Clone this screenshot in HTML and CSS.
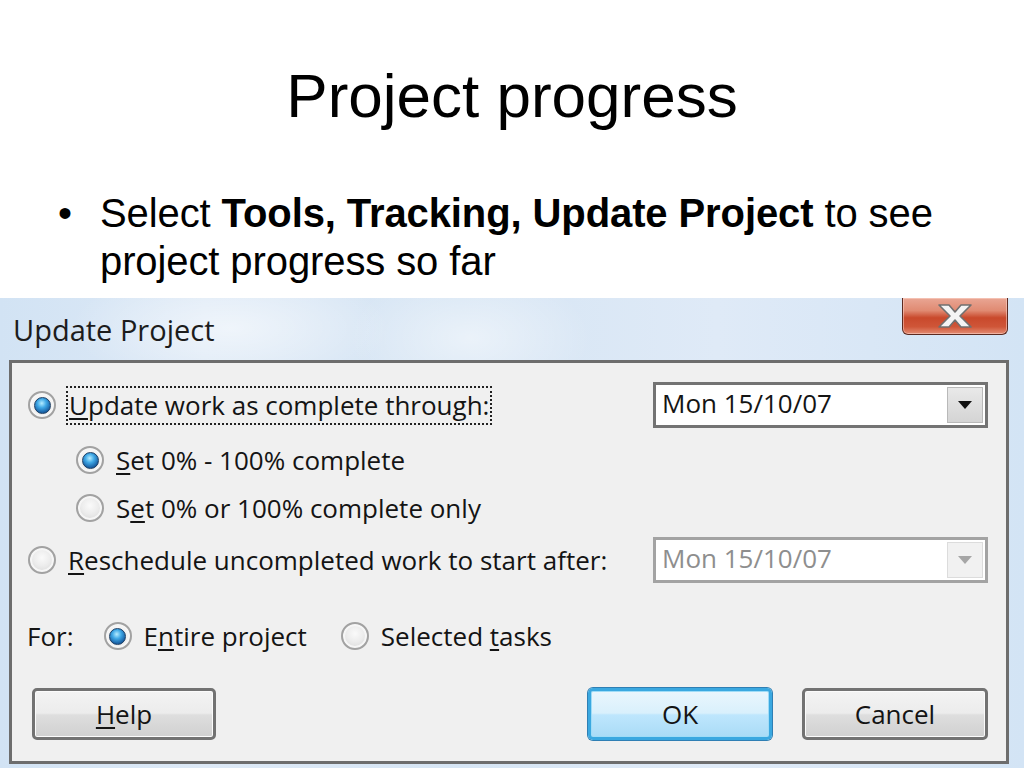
FILE: index.html
```html
<!DOCTYPE html>
<html lang="en">
<head>
    <meta charset="UTF-8">
    <meta name="viewport" content="width=device-width, initial-scale=1.0">
    <title>Project progress</title>
    <link rel="stylesheet" href="styles.css">
</head>
<body>
    <h1 class="slide-title">Project progress</h1>

    <div class="bullet">
        <span class="dot">&bull;</span>
        <p>Select <b>Tools, Tracking, Update Project</b> to see project progress so far</p>
    </div>

    <div class="window">
        <div class="titlebar">
            <span class="caption">Update Project</span>
            <div class="close">
                <svg width="40" height="26" viewBox="0 0 40 26">
                    <path d="M4 2 L14 2 L20 9 L26 2 L36 2 L25 13 L36 24 L26 24 L20 17 L14 24 L4 24 L15 13 Z" fill="#f4f4f4" stroke="#707070" stroke-width="1.6" stroke-linejoin="round"/>
                </svg>
            </div>
        </div>

        <div class="client">
            <div class="row row-first">
                <div class="option">
                    <span class="radio on"></span>
                    <span class="label focus"><u>U</u>pdate work as complete through:</span>
                </div>
                <div class="combo">
                    <span class="combo-text">Mon 15/10/07</span>
                    <span class="combo-btn">
                        <svg width="14" height="8" viewBox="0 0 14 8"><polygon points="0,0 14,0 7,8" fill="#111"/></svg>
                    </span>
                </div>
            </div>

            <div class="row row-sub">
                <div class="option">
                    <span class="radio on"></span>
                    <span class="label"><u>S</u>et 0% - 100% complete</span>
                </div>
            </div>

            <div class="row row-sub row-sub2">
                <div class="option">
                    <span class="radio"></span>
                    <span class="label">S<u>e</u>t 0% or 100% complete only</span>
                </div>
            </div>

            <div class="row row-resched">
                <div class="option">
                    <span class="radio"></span>
                    <span class="label"><u>R</u>eschedule uncompleted work to start after:</span>
                </div>
                <div class="combo disabled">
                    <span class="combo-text">Mon 15/10/07</span>
                    <span class="combo-btn">
                        <svg width="14" height="8" viewBox="0 0 14 8"><polygon points="0,0 14,0 7,8" fill="#a6a6a6"/></svg>
                    </span>
                </div>
            </div>

            <div class="row row-for">
                <span class="label for-label">For:</span>
                <div class="option">
                    <span class="radio on"></span>
                    <span class="label">E<u>n</u>tire project</span>
                </div>
                <div class="option">
                    <span class="radio"></span>
                    <span class="label">Selected <u>t</u>asks</span>
                </div>
            </div>

            <div class="row row-buttons">
                <button class="btn"><u>H</u>elp</button>
                <div class="btn-group">
                    <button class="btn btn-default">OK</button>
                    <button class="btn">Cancel</button>
                </div>
            </div>
        </div>
    </div>
</body>
</html>
```

FILE: styles.css
```css
* {
    margin: 0;
    padding: 0;
    box-sizing: border-box;
}

body {
    width: 1024px;
    height: 768px;
    overflow: hidden;
    background: white;
    font-family: "Liberation Sans", Arial, sans-serif;
    color: black;
}

.slide-title {
    padding-top: 59px;
    font-size: 62px;
    font-weight: normal;
    line-height: 74px;
    text-align: center;
}

.bullet {
    display: flex;
    margin-top: 56px;
    font-size: 40px;
    line-height: 48px;
    letter-spacing: -0.1px;
}

.bullet .dot {
    width: 100px;
    padding-left: 58px;
    flex-shrink: 0;
}

.bullet p {
    width: 860px;
}

/* dialog window */
.window {
    margin-top: 13px;
    height: 470px;
    background:
        radial-gradient(ellipse 160px 60px at 230px 30px, rgba(255,255,255,0.55), rgba(255,255,255,0)),
        radial-gradient(ellipse 120px 70px at 470px 40px, rgba(255,255,255,0.5), rgba(255,255,255,0)),
        linear-gradient(90deg, #d2e3f4 0%, #dde9f6 20%, #d6e5f4 45%, #dfeaf7 70%, #d3e4f5 100%);
    font-family: "Open Sans", "Noto Sans", sans-serif;
    color: #141414;
}

.titlebar {
    height: 62px;
    display: flex;
    justify-content: space-between;
    align-items: flex-start;
    padding-left: 13px;
    padding-right: 16px;
}

.caption {
    font-size: 29px;
    line-height: 40px;
    margin-top: 12px;
    color: #1c1c1c;
}

.close {
    width: 106px;
    height: 37px;
    border: 1px solid #5c2a20;
    border-top: none;
    border-radius: 0 0 6px 6px;
    background: linear-gradient(#e9a694 0%, #e08a72 35%, #c9492c 55%, #cf5638 80%, #e48d74 100%);
    display: flex;
    align-items: center;
    justify-content: center;
    box-shadow: inset 0 0 0 1px rgba(255,220,210,0.5);
}

.client {
    margin-left: 9px;
    margin-right: 15px;
    height: 404px;
    border: 3px solid #6d6d6d;
    background: #f0f0f0;
    padding: 19px 18px 0 0;
}

.row {
    display: flex;
    align-items: center;
    justify-content: space-between;
}

.row-first {
    height: 46px;
    padding-left: 16px;
}

.row-sub {
    height: 28px;
    margin-top: 18px;
    padding-left: 64px;
}

.row-sub2 {
    margin-top: 20px;
}

.row-resched {
    height: 46px;
    margin-top: 15px;
    padding-left: 16px;
}

.row-for {
    height: 28px;
    margin-top: 39px;
    padding-left: 15px;
    justify-content: flex-start;
}

.row-buttons {
    height: 52px;
    margin-top: 38px;
    padding-left: 20px;
}

.option {
    display: flex;
    align-items: center;
    gap: 12px;
}

.label {
    font-size: 26px;
    line-height: 28px;
    white-space: nowrap;
}

.label u, .btn u {
    text-decoration-thickness: 2px;
    text-underline-offset: 3px;
}

.label.focus {
    border: 2px dotted #222;
    padding: 3px 1px 4px;
    margin-left: -2px;
}

.for-label {
    margin-right: 30px;
}

.row-for .option + .option {
    margin-left: 34px;
}

/* radio buttons */
.radio {
    width: 28px;
    height: 28px;
    border-radius: 50%;
    border: 2px solid #a2a2a2;
    background: radial-gradient(circle at 50% 40%, #fafafa 0%, #ececec 45%, #d2d2d2 100%);
    box-shadow: inset 0 0 0 2px #f6f6f6;
    display: flex;
    align-items: center;
    justify-content: center;
    flex-shrink: 0;
}

.radio.on {
    background: radial-gradient(circle at 50% 40%, #ffffff 0%, #eeeeee 60%, #cfcfcf 100%);
}

.radio.on::after {
    content: "";
    width: 15px;
    height: 15px;
    border-radius: 50%;
    border: 1px solid #1b3e64;
    background: radial-gradient(circle at 45% 35%, #b5ecff 0%, #3fa8e6 35%, #1b64a8 70%, #173f73 100%);
}

/* combo boxes */
.combo {
    width: 335px;
    height: 46px;
    border: 3px solid #737373;
    background: white;
    display: flex;
    justify-content: space-between;
}

.combo-text {
    font-size: 26px;
    line-height: 28px;
    padding: 4px 0 0 6px;
}

.combo-btn {
    width: 36px;
    margin: 2px;
    border: 1px solid #b9b9b9;
    background: linear-gradient(#e9e9e9, #d4d4d4);
    display: flex;
    align-items: center;
    justify-content: center;
}

.combo.disabled {
    border-color: #a3a3a3;
}

.combo.disabled .combo-text {
    color: #8e8e8e;
}

.combo.disabled .combo-btn {
    background: #f1f1f1;
    border-color: #dcdcdc;
}

/* push buttons */
.btn {
    width: 184px;
    height: 52px;
    border: 3px solid #727272;
    border-radius: 5px;
    background: linear-gradient(#f3f3f3 0%, #ececec 48%, #dedede 52%, #d0d0d0 100%);
    font-family: "Open Sans", "Noto Sans", sans-serif;
    font-size: 26px;
    color: #141414;
    box-shadow: inset 0 0 0 1px #fbfbfb;
}

.btn-group {
    display: flex;
    gap: 30px;
}

.btn-group .btn:last-child {
    width: 186px;
}

.btn-default {
    border-color: #3aa8e0;
    background: linear-gradient(#eaf6fd 0%, #d9f0fc 48%, #bee6fd 52%, #a9dbf6 100%);
    box-shadow: inset 0 0 0 1px #9fdcf7, 0 0 0 1px #2f7fb4;
}
```
